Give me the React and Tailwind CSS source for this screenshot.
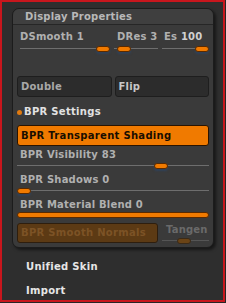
const font = { fontFamily: '"DejaVu Sans", Verdana, sans-serif' };

function Slider({ pos, dim = false, className = "" }) {
  // pos in percent of track where thumb's left sits
  return (
    <div className={`relative h-[8px] ${className}`}>
      <div className={`absolute left-0 right-0 top-[3px] h-px ${dim ? "bg-[#555]" : "bg-[#6e6e6e]"}`} />
      <div
        className={`absolute top-[1px] h-[6px] w-[14px] rounded-[3px] border ${
          dim
            ? "border-[#3a2a18] bg-[#6b4416]"
            : "border-[#5a2a00] bg-[#f07a00] shadow-[0_2px_2px_rgba(40,70,110,0.6)]"
        }`}
        style={{ left: `calc(${pos}% - ${(pos / 100) * 14}px)` }}
      />
    </div>
  );
}

function Label({ children, className = "" }) {
  return (
    <div className={`h-[13px] whitespace-nowrap text-[10px] font-bold leading-[13px] tracking-[0.2px] text-[#b0b0b0] ${className}`}>
      {children}
    </div>
  );
}

export default function App() {
  return (
    <div className="h-[303px] w-[226px] bg-[#262626]" style={font}>
      <div className="h-[302px] w-[225px] border-2 border-[#c8161d] bg-[#2e2e2e]">
        <div className="ml-[10px] mt-[6px] h-[240px] w-[202px] rounded-[7px] border border-[#1c1c1c] bg-[#3a3a3a] shadow-[2px_2px_3px_rgba(0,0,0,0.5)]">
          <div className="h-[16px] rounded-t-[7px] border-b border-[#262626] bg-[#3f3f3f] pl-[12px] text-[10px] font-bold leading-[15px] tracking-[0.2px] text-[#b8b8b8]">
            Display Properties
          </div>

          <div className="px-[4px]">
            <div className="mt-[5px] flex">
              <div className="w-[93px] pl-[3px]">
                <Label>DSmooth 1</Label>
                <Slider pos={100} className="mt-[2px]" />
              </div>
              <div className="ml-[4px] w-[44px]">
                <Label className="pl-[3px]">DRes 3</Label>
                <Slider pos={10} className="mt-[2px]" />
              </div>
              <div className="ml-[4px] flex-1">
                <Label className="pl-[2px]">
                  Es <span className="text-[#d0d0d0]">100</span>
                </Label>
                <Slider pos={100} className="mt-[2px]" />
              </div>
            </div>

            <div className="mt-[23px] flex gap-[3px]">
              <div className="h-[21px] flex-1 rounded-[3px] border border-[#1e1e1e] bg-[#2c2c2c] pl-[3px] text-[10px] font-bold leading-[19px] tracking-[0.2px] text-[#a8a8a8]">
                Double
              </div>
              <div className="h-[21px] flex-1 rounded-[3px] border border-[#1e1e1e] bg-[#2c2c2c] pl-[3px] text-[10px] font-bold leading-[19px] tracking-[0.2px] text-[#c8c8c8]">
                Flip
              </div>
            </div>

            <div className="mt-[8px] flex h-[14px] items-center">
              <div className="h-[5px] w-[5px] rounded-full bg-[#e07a10]" />
              <div className="ml-[2px] text-[10px] font-bold leading-[14px] tracking-[0.3px] text-[#e2e2e2]">
                BPR Settings
              </div>
            </div>

            <div className="mt-[6px] h-[21px] rounded-[3px] border border-[#2a1400] bg-[#f07a00] pl-[3px] text-[10px] font-bold leading-[19px] tracking-[0.3px] text-[#1a0e00]">
              BPR Transparent Shading
            </div>

            <Label className="mt-[2px] pl-[3px]">BPR Visibility 83</Label>
            <Slider pos={77} className="mt-[1px]" />

            <Label className="mt-[3px] pl-[3px]">BPR Shadows 0</Label>
            <Slider pos={0} className="mt-[1px]" />

            <Label className="mt-[3px] pl-[3px]">BPR Material Blend 0</Label>
            <div className="mt-[1px] h-[6px] rounded-[3px] border border-[#5a2a00] bg-[#f07a00]" />

            <div className="mt-[5px] flex">
              <div className="h-[20px] w-[141px] rounded-[3px] border border-[#2e1e0e] bg-[#5c3a14] pl-[3px] text-[10px] font-bold leading-[18px] tracking-[0.3px] text-[#7c5326]">
                BPR Smooth Normals
              </div>
              <div className="ml-[4px] flex-1">
                <div className="pl-[4px] text-[10px] font-bold leading-[13px] tracking-[0.2px] text-[#6a6a6a]">
                  Tangen
                </div>
                <Slider pos={45} dim className="mt-[1px]" />
              </div>
            </div>
          </div>
        </div>

        <div className="ml-[24px] mt-[12px] text-[10px] font-bold leading-[14px] tracking-[0.3px] text-[#e6e6e6]">
          Unified Skin
        </div>
        <div className="ml-[24px] mt-[10px] text-[10px] font-bold leading-[14px] tracking-[0.3px] text-[#e6e6e6]">
          Import
        </div>
      </div>
    </div>
  );
}
